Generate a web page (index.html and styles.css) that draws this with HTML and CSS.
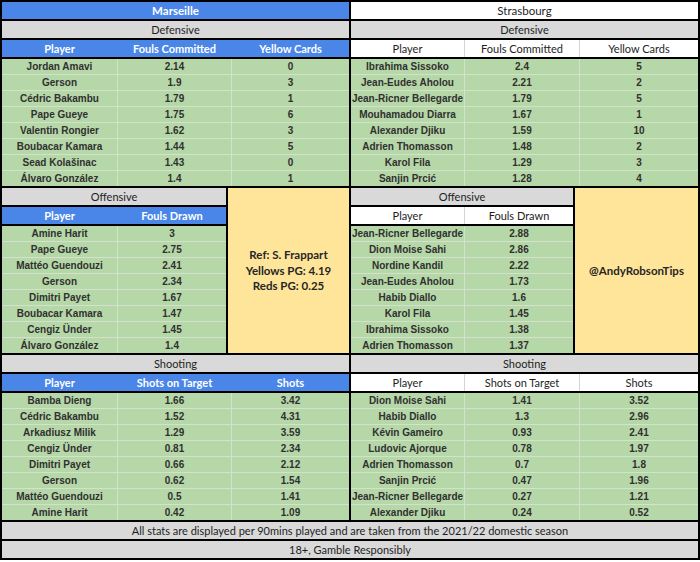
FILE: index.html
```html
<!DOCTYPE html>
<html>
<head>
<meta charset="utf-8">
<link rel="stylesheet" href="styles.css">
</head>
<body>
<div class="sheet">
  <div class="teams">
    <div class="team left">
      <div class="bar blue title">Marseille</div>
      <div class="bar gray">Defensive</div>
      <div class="grid hdr hblue"><div>Player</div><div>Fouls Committed</div><div>Yellow Cards</div></div>
      <div class="grid data">
        <div>Jordan Amavi</div><div>2.14</div><div>0</div>
        <div>Gerson</div><div>1.9</div><div>3</div>
        <div>Cédric Bakambu</div><div>1.79</div><div>1</div>
        <div>Pape Gueye</div><div>1.75</div><div>6</div>
        <div>Valentin Rongier</div><div>1.62</div><div>3</div>
        <div>Boubacar Kamara</div><div>1.44</div><div>5</div>
        <div>Sead Kolašinac</div><div>1.43</div><div>0</div>
        <div>Álvaro González</div><div>1.4</div><div>1</div>
      </div>
      <div class="mid">
        <div class="off">
          <div class="bar gray">Offensive</div>
          <div class="grid two hdr hblue"><div>Player</div><div>Fouls Drawn</div></div>
          <div class="grid two data">
            <div>Amine Harit</div><div>3</div>
            <div>Pape Gueye</div><div>2.75</div>
            <div>Mattéo Guendouzi</div><div>2.41</div>
            <div>Gerson</div><div>2.34</div>
            <div>Dimitri Payet</div><div>1.67</div>
            <div>Boubacar Kamara</div><div>1.47</div>
            <div>Cengiz Ünder</div><div>1.45</div>
            <div>Álvaro González</div><div>1.4</div>
          </div>
        </div>
        <div class="note">Ref: S. Frappart<br>Yellows PG: 4.19<br>Reds PG: 0.25</div>
      </div>
      <div class="bar gray">Shooting</div>
      <div class="grid hdr hblue"><div>Player</div><div>Shots on Target</div><div>Shots</div></div>
      <div class="grid data">
        <div>Bamba Dieng</div><div>1.66</div><div>3.42</div>
        <div>Cédric Bakambu</div><div>1.52</div><div>4.31</div>
        <div>Arkadiusz Milik</div><div>1.29</div><div>3.59</div>
        <div>Cengiz Ünder</div><div>0.81</div><div>2.34</div>
        <div>Dimitri Payet</div><div>0.66</div><div>2.12</div>
        <div>Gerson</div><div>0.62</div><div>1.54</div>
        <div>Mattéo Guendouzi</div><div>0.5</div><div>1.41</div>
        <div>Amine Harit</div><div>0.42</div><div>1.09</div>
      </div>
    </div>
    <div class="team right">
      <div class="bar white title">Strasbourg</div>
      <div class="bar gray">Defensive</div>
      <div class="grid hdr hwhite"><div>Player</div><div>Fouls Committed</div><div>Yellow Cards</div></div>
      <div class="grid data">
        <div>Ibrahima Sissoko</div><div>2.4</div><div>5</div>
        <div>Jean-Eudes Aholou</div><div>2.21</div><div>2</div>
        <div>Jean-Ricner Bellegarde</div><div>1.79</div><div>5</div>
        <div>Mouhamadou Diarra</div><div>1.67</div><div>1</div>
        <div>Alexander Djiku</div><div>1.59</div><div>10</div>
        <div>Adrien Thomasson</div><div>1.48</div><div>2</div>
        <div>Karol Fila</div><div>1.29</div><div>3</div>
        <div>Sanjin Prcić</div><div>1.28</div><div>4</div>
      </div>
      <div class="mid">
        <div class="off">
          <div class="bar gray">Offensive</div>
          <div class="grid two hdr hwhite"><div>Player</div><div>Fouls Drawn</div></div>
          <div class="grid two data">
            <div>Jean-Ricner Bellegarde</div><div>2.88</div>
            <div>Dion Moise Sahi</div><div>2.86</div>
            <div>Nordine Kandil</div><div>2.22</div>
            <div>Jean-Eudes Aholou</div><div>1.73</div>
            <div>Habib Diallo</div><div>1.6</div>
            <div>Karol Fila</div><div>1.45</div>
            <div>Ibrahima Sissoko</div><div>1.38</div>
            <div>Adrien Thomasson</div><div>1.37</div>
          </div>
        </div>
        <div class="note">@AndyRobsonTips</div>
      </div>
      <div class="bar gray">Shooting</div>
      <div class="grid hdr hwhite"><div>Player</div><div>Shots on Target</div><div>Shots</div></div>
      <div class="grid data">
        <div>Dion Moise Sahi</div><div>1.41</div><div>3.52</div>
        <div>Habib Diallo</div><div>1.3</div><div>2.96</div>
        <div>Kévin Gameiro</div><div>0.93</div><div>2.41</div>
        <div>Ludovic Ajorque</div><div>0.78</div><div>1.97</div>
        <div>Adrien Thomasson</div><div>0.7</div><div>1.8</div>
        <div>Sanjin Prcić</div><div>0.47</div><div>1.96</div>
        <div>Jean-Ricner Bellegarde</div><div>0.27</div><div>1.21</div>
        <div>Alexander Djiku</div><div>0.24</div><div>0.52</div>
      </div>
    </div>
  </div>
  <div class="bar gray foot">All stats are displayed per 90mins played and are taken from the 2021/22 domestic season</div>
  <div class="bar gray foot">18+, Gamble Responsibly</div>
</div>
</body>
</html>
```

FILE: styles.css
```css
body {
  margin: 0;
  background: #fff;
}

.sheet {
  width: 696px;
  border: 2px solid #000;
  background: #000;
  display: flex;
  flex-direction: column;
  gap: 2px;
  font-family: Lato, "Open Sans", sans-serif;
  color: #1e1e1e;
}

.teams {
  display: flex;
  gap: 2px;
}

.team {
  width: 347px;
  display: flex;
  flex-direction: column;
  gap: 2px;
}

.bar {
  height: 17px;
  display: flex;
  align-items: center;
  justify-content: center;
  font-size: 11px;
  white-space: nowrap;
}

.bar.title {
  font-size: 11.5px;
}

.blue {
  background: #4a86e8;
  color: #fff;
  font-weight: 700;
}

.gray {
  background: #d9d9d9;
}

.white {
  background: #fff;
}

.grid {
  display: grid;
  gap: 1px;
}

.left .grid {
  grid-template-columns: 115px 113px 1fr;
}

.right .grid {
  grid-template-columns: 113px 114px 1fr;
}

.left .grid.two {
  grid-template-columns: 115px 1fr;
}

.right .grid.two {
  grid-template-columns: 113px 1fr;
}

.grid > div {
  display: flex;
  align-items: center;
  justify-content: center;
  white-space: nowrap;
  overflow: hidden;
}

.hdr {
  height: 17px;
  font-size: 11px;
}

.hblue {
  background: #4a86e8;
  color: #fff;
  font-weight: 700;
}

.hwhite {
  background: #d4d4d4;
}

.hwhite > div {
  background: #fff;
}

.data {
  grid-auto-rows: 15px;
  background: #d3e3cb;
  font-family: "Liberation Sans", Arial, sans-serif;
  font-weight: 700;
  font-size: 10px;
  color: #303030;
}

.data > div {
  background: #b6d7a8;
}

.mid {
  display: flex;
  gap: 2px;
}

.off {
  flex: 1;
  display: flex;
  flex-direction: column;
  gap: 2px;
}

.left .note {
  width: 121px;
}

.right .note {
  width: 123px;
}

.note {
  background: #ffe599;
  display: flex;
  align-items: center;
  justify-content: center;
  text-align: center;
  font-weight: 700;
  font-size: 11.5px;
  line-height: 15.5px;
  color: #262626;
}

.foot {
  font-size: 11px;
}
```
